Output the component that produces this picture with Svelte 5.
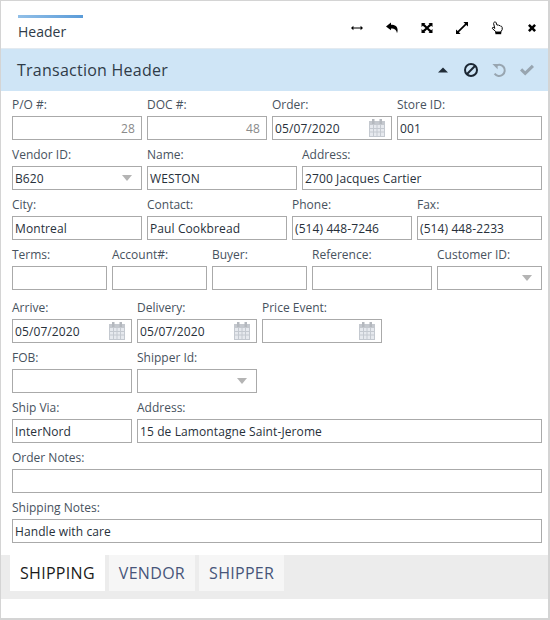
<script>
    const rows = [
        [
            { label: 'P/O #:', w: 130, value: '28', kind: 'num' },
            { label: 'DOC #:', w: 120, value: '48', kind: 'num' },
            { label: 'Order:', w: 120, value: '05/07/2020', kind: 'date' },
            { label: 'Store ID:', w: 145, value: '001' }
        ],
        [
            { label: 'Vendor ID:', w: 130, value: 'B620', kind: 'select' },
            { label: 'Name:', w: 150, value: 'WESTON' },
            { label: 'Address:', w: 240, value: '2700 Jacques Cartier' }
        ],
        [
            { label: 'City:', w: 130, value: 'Montreal' },
            { label: 'Contact:', w: 140, value: 'Paul Cookbread' },
            { label: 'Phone:', w: 120, value: '(514) 448-7246' },
            { label: 'Fax:', w: 125, value: '(514) 448-2233' }
        ],
        [
            { label: 'Terms:', w: 95, value: '' },
            { label: 'Account#:', w: 95, value: '' },
            { label: 'Buyer:', w: 95, value: '' },
            { label: 'Reference:', w: 120, value: '' },
            { label: 'Customer ID:', w: 105, value: '', kind: 'select' }
        ],
        [
            { label: 'Arrive:', w: 120, value: '05/07/2020', kind: 'date' },
            { label: 'Delivery:', w: 120, value: '05/07/2020', kind: 'date' },
            { label: 'Price Event:', w: 120, value: '', kind: 'date' }
        ],
        [
            { label: 'FOB:', w: 120, value: '' },
            { label: 'Shipper Id:', w: 120, value: '', kind: 'select' }
        ],
        [
            { label: 'Ship Via:', w: 120, value: 'InterNord' },
            { label: 'Address:', w: 405, value: '15 de Lamontagne Saint-Jerome' }
        ],
        [{ label: 'Order Notes:', w: 530, value: '' }],
        [{ label: 'Shipping Notes:', w: 530, value: 'Handle with care' }]
    ];

    const tabs = ['SHIPPING', 'VENDOR', 'SHIPPER'];
    let activeTab = 'SHIPPING';
</script>

<div class="panel">
    <div class="top">
        <div class="top-tab">Header</div>
        <div class="top-icons">
            <svg width="14" height="14" viewBox="0 0 14 14"><path d="M1 7 3.4 4.8V6.4H10.6V4.8L13 7 10.6 9.2V7.6H3.4V9.2Z" fill="#000"/></svg>
            <svg width="14" height="14" viewBox="0 0 14 14"><path d="M1 5.4 6 1.6V3.8C10 3.8 12.6 5.6 12.6 9.2 12.6 10.2 12.4 11.2 12 12.2 11.6 9.6 10 7.6 6 7.6V9.2Z" fill="#000"/></svg>
            <svg width="14" height="14" viewBox="0 0 14 14"><path d="M1.5 2H5.5L4.4 3.1 7 5.6 9.6 3.1 8.5 2H12.5V6L11.2 4.8 8.5 7 11.2 9.2 12.5 8V12H8.5L9.6 10.9 7 8.4 4.4 10.9 5.5 12H1.5V8L2.8 9.2 5.5 7 2.8 4.8 1.5 6Z" fill="#000"/></svg>
            <svg width="14" height="14" viewBox="0 0 14 14"><path d="M8.4 1H13V5.6L11.3 3.9 3.9 11.3 5.6 13H1V8.4L2.7 10.1 10.1 2.7Z" fill="#000"/></svg>
            <svg width="14" height="14" viewBox="0 0 14 14"><path d="M4.5 1C5.4.6 6 1.2 6.2 2L7 4.2C8 3.8 8.6 3.9 9 4.5 9.8 4.3 10.3 4.6 10.6 5.2 11.6 5.1 12.2 5.8 12.2 6.6V8.6L11 10.6V11.4H5.6V10.4L2.4 7.6C2 6.8 2.8 6 3.8 6.6L4.8 7.4 3.6 2.6C3.4 2 3.9 1.4 4.5 1Z" fill="#fff" stroke="#000" stroke-width="1"/><rect x="5.4" y="10.6" width="5.8" height="2.6" fill="#000"/></svg>
            <svg width="14" height="14" viewBox="0 0 14 14"><path d="M3 4.8 4.8 3 7 5.2 9.2 3 11 4.8 8.8 7 11 9.2 9.2 11 7 8.8 4.8 11 3 9.2 5.2 7Z" fill="#000"/></svg>
        </div>
    </div>

    <div class="bar">
        <span class="bar-title">Transaction Header</span>
        <div class="bar-icons">
            <svg width="16" height="16" viewBox="0 0 16 16"><path d="M3 10.5 8 5.5 13 10.5Z" fill="#222d38"/></svg>
            <svg width="16" height="16" viewBox="0 0 16 16"><circle cx="8" cy="8" r="6" fill="none" stroke="#1c2733" stroke-width="2"/><path d="M3.8 12.2 12.2 3.8" stroke="#1c2733" stroke-width="2"/></svg>
            <svg width="16" height="16" viewBox="0 0 16 16"><path d="M4.4 4.2A5.6 5.6 0 1 1 3.6 11.6" fill="none" stroke="#98a5b0" stroke-width="2"/><path d="M1.4 2H6.6V7.2Z" fill="#98a5b0"/></svg>
            <svg width="16" height="16" viewBox="0 0 16 16"><path d="M1 8.4 3.2 6.2 6.2 9.2 12.8 2.8 15 5 6.2 13.6Z" fill="#98a5b0"/></svg>
        </div>
    </div>

    <form class="form">
        {#each rows as row, i}
            <div class="row" class:tall={i === 4}>
                {#each row as field}
                    <div class="field" style="width: {field.w}px">
                        <span class="label">{field.label}</span>
                        <div class="input" class:num={field.kind === 'num'}>
                            <span>{field.value}</span>
                            {#if field.kind === 'select'}
                                <span class="caret"></span>
                            {:else if field.kind === 'date'}
                                <svg class="cal" width="16" height="18" viewBox="0 0 16 18">
                                    <rect x="0.5" y="2.5" width="15" height="15" fill="#e6e9ee" stroke="#c4c9d0"/>
                                    <rect x="0" y="2" width="16" height="4" fill="#c4c8ce"/>
                                    <rect x="3" y="0" width="2.5" height="5" fill="#b4b8be"/>
                                    <rect x="10.5" y="0" width="2.5" height="5" fill="#b4b8be"/>
                                    <path d="M4.5 6V17M8 6V17M11.5 6V17M1 9.5H15M1 13H15" stroke="#c4c9d0" stroke-width="1"/>
                                </svg>
                            {/if}
                        </div>
                    </div>
                {/each}
            </div>
        {/each}
    </form>

    <div class="tabs">
        {#each tabs as tab}
            <button type="button" class="tab" class:active={activeTab === tab} on:click={() => (activeTab = tab)}>{tab}</button>
        {/each}
    </div>
</div>

<style>
    :global(body) {
        margin: 0;
        background: #fff;
    }

    .panel {
        width: 550px;
        height: 620px;
        box-sizing: border-box;
        border: 1px solid #d4d4d4;
        border-width: 1px 2px 2px 1px;
        font-family: "Open Sans", sans-serif;
        color: #2f3b48;
        overflow: hidden;
    }

    .top {
        height: 47px;
        display: flex;
        justify-content: space-between;
        padding-left: 17px;
        padding-right: 9px;
        border-bottom: 1px solid #e3eaf0;
    }

    .top-tab {
        width: 65px;
        margin-top: 14px;
        height: 33px;
        box-sizing: border-box;
        border-top: 3px solid;
        border-image: linear-gradient(to right, #92c0e8, #5a9bd8) 1;
        padding-top: 4px;
        font-size: 14px;
        line-height: 19px;
    }

    .top-icons {
        display: flex;
        gap: 21px;
        margin-top: 20px;
        height: 14px;
    }

    .bar {
        height: 42px;
        background: #cfe5f6;
        display: flex;
        align-items: center;
        justify-content: space-between;
        padding-left: 16px;
        padding-right: 13px;
    }

    .bar-title {
        font-size: 16px;
        font-weight: 500;
        letter-spacing: 0.25px;
    }

    .bar-icons {
        display: flex;
        gap: 12px;
    }

    .form {
        padding: 5px 0 0 11px;
    }

    .row {
        display: flex;
        gap: 5px;
        margin-bottom: 6px;
    }

    .row.tall {
        padding-top: 3px;
    }

    .field {
        display: flex;
        flex-direction: column;
        flex: none;
    }

    .label {
        font-size: 12px;
        line-height: 18px;
        height: 20px;
        color: #47525e;
    }

    .input {
        height: 24px;
        box-sizing: border-box;
        border: 1px solid #aaa;
        background: #fff;
        display: flex;
        align-items: center;
        justify-content: space-between;
        padding: 0 2px;
        font-size: 12px;
        font-weight: 500;
        color: #27303a;
        letter-spacing: 0.1px;
    }

    .input.num {
        justify-content: flex-end;
        padding-right: 6px;
        font-weight: 400;
        color: #8a8a8a;
    }

    .caret {
        width: 0;
        height: 0;
        margin-right: 7px;
        border-left: 5px solid transparent;
        border-right: 5px solid transparent;
        border-top: 6px solid #b4b4b4;
    }

    .cal {
        flex: none;
        margin-right: 4px;
    }

    .tabs {
        margin-top: 12px;
        height: 44px;
        background: #ececec;
        display: flex;
        gap: 4px;
        padding-left: 9px;
        align-items: flex-start;
    }

    .tab {
        height: 36px;
        border: none;
        padding: 0 10px;
        background: #f6f6f6;
        font-family: inherit;
        font-size: 16px;
        font-weight: 500;
        letter-spacing: 0.3px;
        color: #47557a;
    }

    .tab.active {
        background: #fff;
        color: #1a1a1a;
    }
</style>
